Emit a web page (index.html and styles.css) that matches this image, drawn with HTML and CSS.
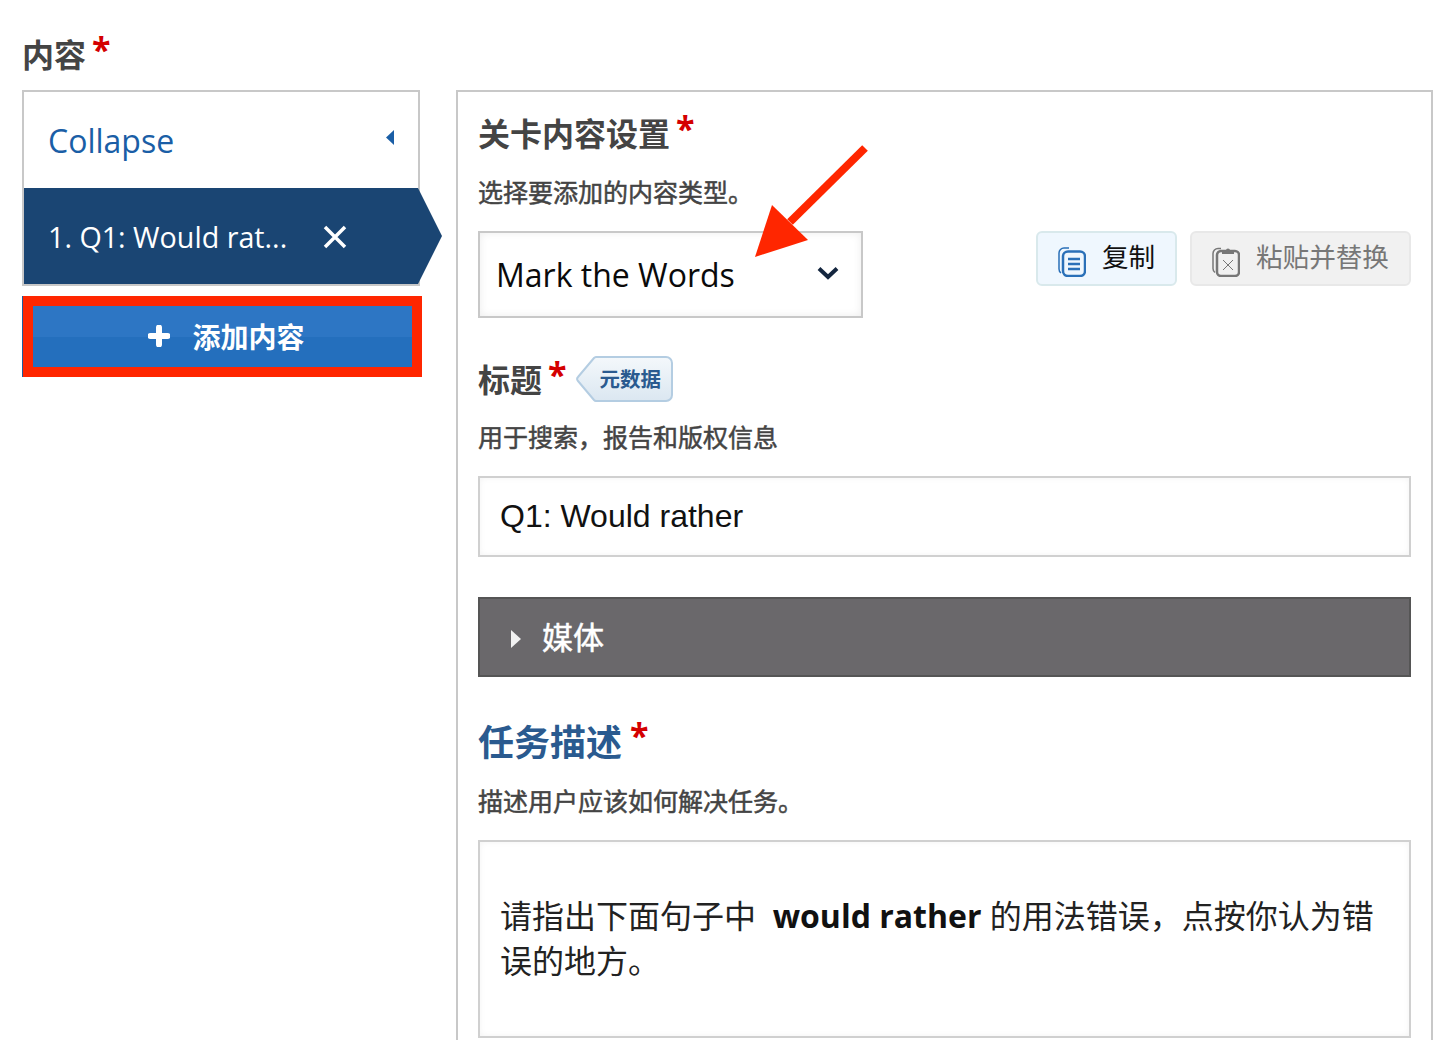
FILE: index.html
```html
<!DOCTYPE html>
<html lang="en">
<head>
  <meta charset="UTF-8">
  <title>内容</title>
  <link rel="stylesheet" href="styles.css">
</head>
<body>
  <h1 class="page-label">内容<span class="req">*</span></h1>

  <div class="columns">
    <div class="sidebar">
      <div class="list">
        <div class="collapse">
          <span>Collapse</span>
          <svg class="collapse-arrow" width="8" height="15" viewBox="0 0 8 15"><path d="M8 0v15L0 7.500z"/></svg>
        </div>
        <div class="list-item">
          <span>1. Q1: Would rat...</span>
          <svg class="remove" width="24" height="24" viewBox="0 0 24 24"><path d="M2 2l20 20M22 2L2 22"/></svg>
        </div>
      </div>
      <button class="add-btn">
        <svg width="22" height="22" viewBox="0 0 22 22"><path d="M11 2.500v17M2.500 11h17"/></svg>
        <span>添加内容</span>
      </button>
    </div>

    <div class="panel">
      <h2 class="field-label">关卡内容设置<span class="req">*</span></h2>
      <p class="field-desc">选择要添加的内容类型。</p>

      <div class="type-row">
        <div class="select">
          <span>Mark the Words</span>
          <svg width="22" height="14" viewBox="0 0 22 14"><path d="M2 2.500l9 8.500 9-8.500"/></svg>
        </div>
        <div class="clip-btns">
          <button class="clip-btn copy">
            <svg width="28" height="30" viewBox="0 0 28 30">
              <path class="back" d="M11 1H6a5 5 0 0 0-5 5v16a5 5 0 0 0 2 4"/>
              <rect x="5" y="4.500" width="22" height="24.500" rx="5"/>
              <path d="M10 12h12M10 17h12M10 22h12"/>
            </svg>
            <span>复制</span>
          </button>
          <button class="clip-btn paste">
            <svg width="28" height="30" viewBox="0 0 28 30">
              <path class="back" d="M9 1.500H6a5 5 0 0 0-5 5v15a5 5 0 0 0 2 4"/>
              <rect x="5" y="4" width="22" height="25" rx="4"/>
              <path class="clip" d="M10 7V3.500h4a2 2 0 0 1 4 0h4V7z"/>
              <path class="thin" d="M11 13l10 10M21 13L11 23"/>
            </svg>
            <span>粘贴并替换</span>
          </button>
        </div>
      </div>

      <div class="title-row">
        <h2 class="field-label">标题<span class="req">*</span></h2>
        <span class="meta-tag">
          <svg class="meta-shape" width="97" height="46" viewBox="0 0 97 46">
            <defs>
              <linearGradient id="metaFill" x1="0" y1="0" x2="0" y2="1">
                <stop offset="0" stop-color="#f4f8fb"/>
                <stop offset="1" stop-color="#dbe7f1"/>
              </linearGradient>
            </defs>
            <path d="M20 1H90a6 6 0 0 1 6 6V39a6 6 0 0 1-6 6H20a3 3 0 0 1-2-1L2 25a3 3 0 0 1 0-4L18 2a3 3 0 0 1 2-1z"/>
          </svg>
          <span class="meta-text">元数据</span>
        </span>
      </div>
      <p class="field-desc">用于搜索，报告和版权信息</p>
      <div class="text-input">Q1: Would rather</div>

      <div class="media-bar">
        <svg width="10" height="18" viewBox="0 0 10 18"><path d="M0 0l10 9-10 9z"/></svg>
        <span>媒体</span>
      </div>

      <h2 class="field-label task-label">任务描述<span class="req">*</span></h2>
      <p class="field-desc">描述用户应该如何解决任务。</p>
      <div class="text-area">请指出下面句子中 &nbsp;<strong>would rather</strong> 的用法错误，点按你认为错误的地方。</div>
    </div>
  </div>

  <svg class="annot-arrow" width="114" height="114" viewBox="0 0 114 114">
    <path d="M110 4L35 78" class="shaft"/>
    <path d="M0 113L17 61 53 96z" class="head"/>
  </svg>
</body>
</html>
```

FILE: styles.css
```css
html, body {
  margin: 0;
  height: 1040px;
  overflow: hidden;
  background: #fff;
}
body {
  position: relative;
  padding: 32px 15px 0 22px;
  font-family: "Open Sans", "Noto Sans CJK SC", sans-serif;
  color: #444;
}
h1, h2, p {
  margin: 0;
}
button {
  font-family: inherit;
}

.page-label {
  font-size: 32px;
  line-height: 46px;
  height: 58px;
  color: #444;
}
.req {
  color: #d40000;
  font-size: 34px;
  line-height: 20px;
  margin-left: 6px;
  position: relative;
  top: -5px;
}

.columns {
  display: flex;
  align-items: flex-start;
  gap: 36px;
}
.sidebar {
  width: 398px;
  flex: none;
}

.list {
  border: 2px solid #c8c8c8;
  box-sizing: border-box;
  width: 398px;
}
.collapse {
  height: 96px;
  padding: 0 24px 0 24px;
  display: flex;
  align-items: center;
  justify-content: space-between;
  color: #1a5ea6;
  font-size: 32px;
}
.collapse-arrow {
  fill: #1a5ea6;
  margin-top: -5px;
}
.list-item {
  position: relative;
  height: 96px;
  background: #1a4573;
  color: #fff;
  font-size: 28.700px;
  padding-left: 24px;
  display: flex;
  align-items: center;
  gap: 36px;
}
.list-item::after {
  content: "";
  position: absolute;
  left: 100%;
  top: 0;
  width: 24px;
  height: 96px;
  background: #1a4573;
  clip-path: polygon(0 0, 100% 50%, 0 100%);
}
.remove {
  fill: none;
  stroke: #fff;
  stroke-width: 3.500;
  margin-top: 2px;
}

.add-btn {
  display: flex;
  align-items: center;
  justify-content: center;
  gap: 22px;
  box-sizing: border-box;
  width: 399px;
  height: 81px;
  margin: 10px 0 0 1px;
  border: 10px solid #ff2600;
  box-shadow: -1px 0 0 #1f5c9e;
  background: linear-gradient(#2d76c4, #2d76c4 50%, #246fbd 50%);
  color: #fff;
  font-size: 28px;
  font-weight: 700;
  padding: 0 0 2px 8px;
}
.add-btn svg {
  fill: none;
  stroke: #fff;
  stroke-width: 6;
  stroke-linecap: round;
}

.panel {
  box-sizing: border-box;
  width: 977px;
  height: 1000px;
  border: 2px solid #c8c8c8;
  padding: 18px 20px 0 20px;
}
.field-label {
  font-size: 32px;
  line-height: 48px;
  font-weight: 700;
  color: #444;
}
.field-desc {
  font-size: 25px;
  line-height: 37px;
  margin-top: 16px;
  color: #444;
  -webkit-text-stroke: .5px #444;
}

.type-row {
  display: flex;
  justify-content: space-between;
  align-items: flex-start;
  margin-top: 20px;
}
.select {
  box-sizing: border-box;
  width: 385px;
  height: 87px;
  border: 2px solid #c8c8c8;
  box-shadow: inset 0 0 8px rgba(0, 0, 0, .08);
  display: flex;
  align-items: center;
  justify-content: space-between;
  padding: 0 22px 0 16px;
  color: #0a0a0a;
  font-size: 32px;
}
.select svg {
  fill: none;
  stroke: #14263f;
  stroke-width: 4;
  margin-top: -3px;
}
.clip-btns {
  display: flex;
  gap: 13px;
}
.clip-btn {
  display: flex;
  align-items: center;
  gap: 16px;
  box-sizing: border-box;
  height: 55px;
  border-radius: 6px;
  font-size: 26.600px;
  padding: 0 0 0 20px;
  white-space: nowrap;
}
.clip-btn svg {
  fill: none;
  flex: none;
  stroke-width: 2.500;
  margin-top: 6px;
}
.clip-btn span {
  margin-top: -7px;
}
.clip-btn .back {
  stroke-width: 1.500;
}
.copy {
  width: 141px;
  background: #eff7fe;
  border: 2px solid #d9e9ec;
  color: #111;
}
.copy svg {
  stroke: #2a70b8;
}
.paste {
  width: 221px;
  background: #f1f1f1;
  border: 2px solid #e8e8e8;
  color: #777;
}
.paste svg {
  stroke: #777;
}
.paste .thin {
  stroke-width: 1;
}
.paste .clip {
  fill: #777;
  stroke: none;
}

.title-row {
  display: flex;
  align-items: center;
  gap: 9px;
  margin-top: 38px;
}
.title-row + .field-desc {
  margin-top: 15px;
}
.meta-tag {
  position: relative;
  display: block;
  width: 97px;
  height: 46px;
  margin-top: -2px;
}
.meta-shape {
  position: absolute;
  left: 0;
  top: 0;
  fill: url(#metaFill);
  stroke: #b4cde2;
  stroke-width: 2;
}
.meta-text {
  position: relative;
  display: block;
  padding-left: 24px;
  color: #2a5a8f;
  font-size: 20.500px;
  font-weight: 700;
  line-height: 46px;
}

.text-input {
  box-sizing: border-box;
  height: 81px;
  margin-top: 20px;
  border: 2px solid #d0d0d0;
  box-shadow: inset 0 0 6px rgba(0, 0, 0, .05);
  padding: 0 20px;
  display: flex;
  align-items: center;
  color: #111;
  font-family: "Liberation Sans", sans-serif;
  font-size: 32px;
}

.media-bar {
  box-sizing: border-box;
  height: 80px;
  margin-top: 40px;
  border: 2px solid #555;
  background: #6a686b;
  color: #fff;
  font-size: 31px;
  -webkit-text-stroke: .5px #fff;
  display: flex;
  align-items: center;
  gap: 21px;
  padding-left: 31px;
}
.media-bar span {
  margin-top: -3px;
}
.media-bar svg {
  fill: #f2f2f2;
  margin-top: 3px;
}

.task-label {
  color: #2a5a8f;
  font-size: 36px;
  line-height: 54px;
  margin-top: 39px;
}
.task-label .req {
  top: -8px;
  margin-left: 8px;
}
.task-label + .field-desc {
  margin-top: 13px;
}

.text-area {
  box-sizing: border-box;
  height: 198px;
  margin-top: 20px;
  border: 2px solid #d0d0d0;
  box-shadow: inset 0 0 6px rgba(0, 0, 0, .05);
  padding: 51px 20px 0;
  color: #222;
  font-size: 32px;
  line-height: 45px;
}
.text-area strong {
  color: #111;
}

/* red annotation arrow over the select */
.annot-arrow {
  position: absolute;
  left: 755px;
  top: 144px;
}
.shaft {
  fill: none;
  stroke: #ff2600;
  stroke-width: 8;
}
.head {
  fill: #ff2600;
}
```
